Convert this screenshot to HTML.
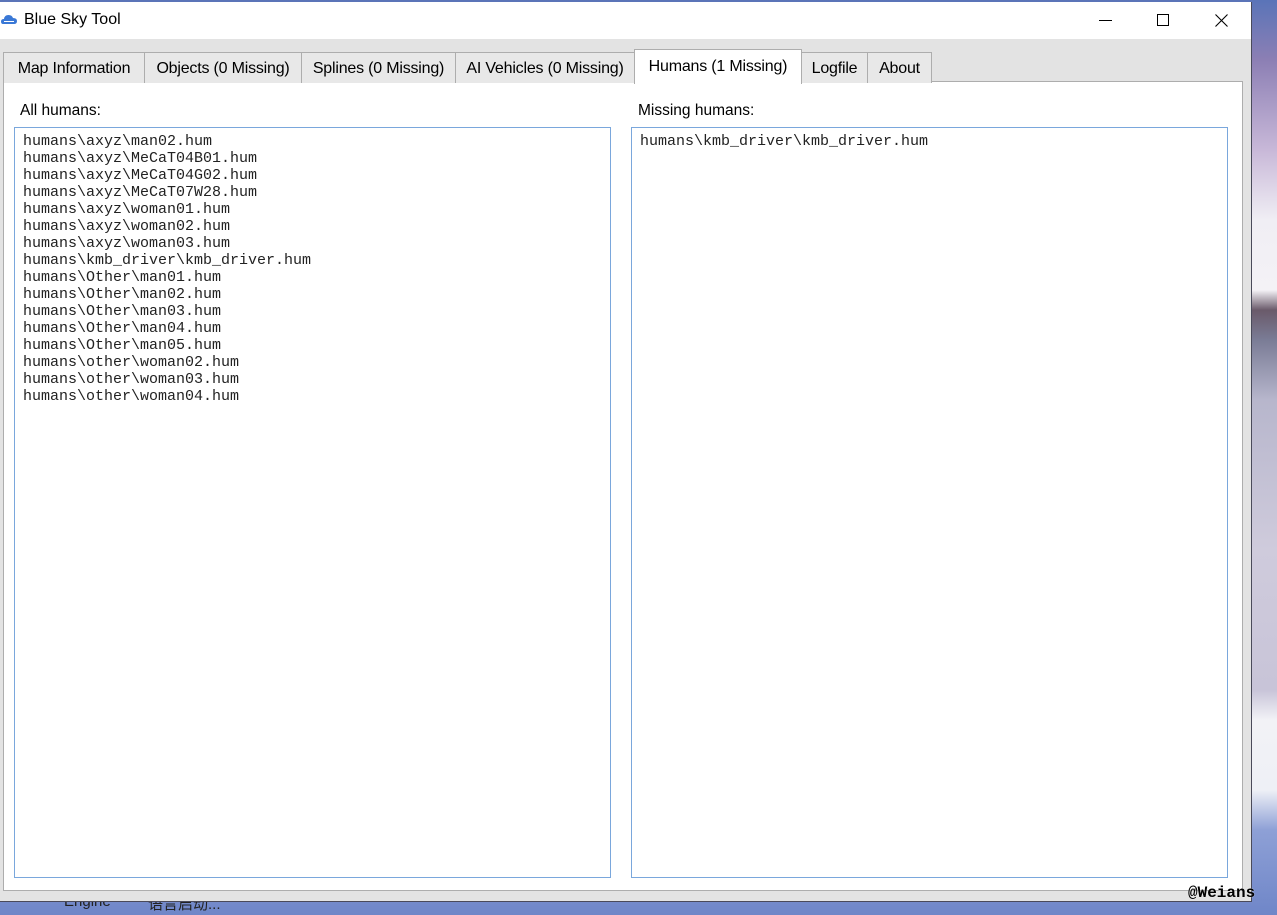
<!DOCTYPE html>
<html><head><meta charset="utf-8"><style>
*{margin:0;padding:0;box-sizing:border-box}
body{width:1277px;height:915px;overflow:hidden;position:relative;font-family:"Liberation Sans",sans-serif;background:linear-gradient(180deg,#5a74b8 0px,#8c7fb4 60px,#c8b8d8 150px,#f0eef4 220px,#f4f2f6 290px,#6a5a6a 310px,#7a7c96 340px,#b7b6cc 400px,#cfcbdc 550px,#c8c4d8 690px,#f2f2f6 720px,#eef0f6 790px,#8ea0d6 830px,#6f86c8 915px)}
.win{position:absolute;left:0;top:2px;width:1252px;height:900px;background:#e3e3e3;border-right:1px solid #4a4a5a;border-bottom:1px solid #4a4a5a}
.title{position:absolute;left:0;top:0;width:1251px;height:37px;background:#fff}
.title .t{position:absolute;left:24px;top:9px;font-size:16px;color:#000}
.tab{position:absolute;top:50px;height:31px;border:1px solid #adadad;border-bottom:none;background:#e8e8e8;font-size:16px;color:#000;text-align:center;line-height:31px;letter-spacing:-0.2px}
.tab.sel{top:47px;height:35px;background:#fff;line-height:33px;z-index:2}
.panel{position:absolute;left:3px;top:79px;width:1240px;height:810px;background:#fff;border:1px solid #adadad}
.lbl{position:absolute;font-size:15.5px;color:#000}
.box{position:absolute;top:125px;height:751px;border:1px solid #7aa7dc;background:#fff;font-family:"Liberation Mono",monospace;font-size:15px;line-height:17px;padding:5px 0 0 8px;white-space:pre;color:#222}
.wm{position:absolute;left:1188px;top:884px;font-family:"Liberation Mono",monospace;font-size:16px;font-weight:bold;color:#000;text-shadow:0 0 1px #fff}
.dt{position:absolute;top:893px;font-size:15px;color:#222}
</style></head><body>
<div class="dt" style="left:64px">Engine</div>
<div class="dt" style="left:148px;font-family:'Liberation Sans','Noto Sans CJK SC',sans-serif">语言启动...</div>
<div class="win">
 <div class="title">
  <svg style="position:absolute;left:1px;top:11px" width="17" height="12" viewBox="0 0 17 12"><path d="M2 11 Q0 11 0 8.5 Q0 6 3 6 Q3.5 2 7.5 2 Q11 2 12 5 Q16 5 16 8 Q16 11 13 11Z" fill="#3a78d6"/><rect x="3" y="8" width="10" height="1" fill="#fff"/></svg>
  <div class="t">Blue Sky Tool</div>
  <div style="position:absolute;left:1099px;top:18px;width:13px;height:1px;background:#000"></div>
  <div style="position:absolute;left:1157px;top:12px;width:12px;height:12px;border:1px solid #000"></div>
  <svg style="position:absolute;left:1215px;top:12px" width="13" height="13" viewBox="0 0 13 13"><path d="M0.5 0.5L12.5 12.5M12.5 0.5L0.5 12.5" stroke="#000" stroke-width="1.1"/></svg>
 </div>
 <div class="panel"></div>
 <div class="tab" style="left:3px;width:142px">Map Information</div>
 <div class="tab" style="left:144px;width:158px">Objects (0 Missing)</div>
 <div class="tab" style="left:301px;width:155px">Splines (0 Missing)</div>
 <div class="tab" style="left:455px;width:180px">AI Vehicles (0 Missing)</div>
 <div class="tab sel" style="left:634px;width:168px">Humans (1 Missing)</div>
 <div class="tab" style="left:801px;width:67px">Logfile</div>
 <div class="tab" style="left:867px;width:65px">About</div>
 <div class="lbl" style="left:20px;top:100px">All humans:</div>
 <div class="lbl" style="left:638px;top:100px">Missing humans:</div>
 <div class="box" style="left:14px;width:597px">humans\axyz\man02.hum
humans\axyz\MeCaT04B01.hum
humans\axyz\MeCaT04G02.hum
humans\axyz\MeCaT07W28.hum
humans\axyz\woman01.hum
humans\axyz\woman02.hum
humans\axyz\woman03.hum
humans\kmb_driver\kmb_driver.hum
humans\Other\man01.hum
humans\Other\man02.hum
humans\Other\man03.hum
humans\Other\man04.hum
humans\Other\man05.hum
humans\other\woman02.hum
humans\other\woman03.hum
humans\other\woman04.hum</div>
 <div class="box" style="left:631px;width:597px">humans\kmb_driver\kmb_driver.hum</div>
</div>
<div class="wm">@Weians</div>
</body></html>
